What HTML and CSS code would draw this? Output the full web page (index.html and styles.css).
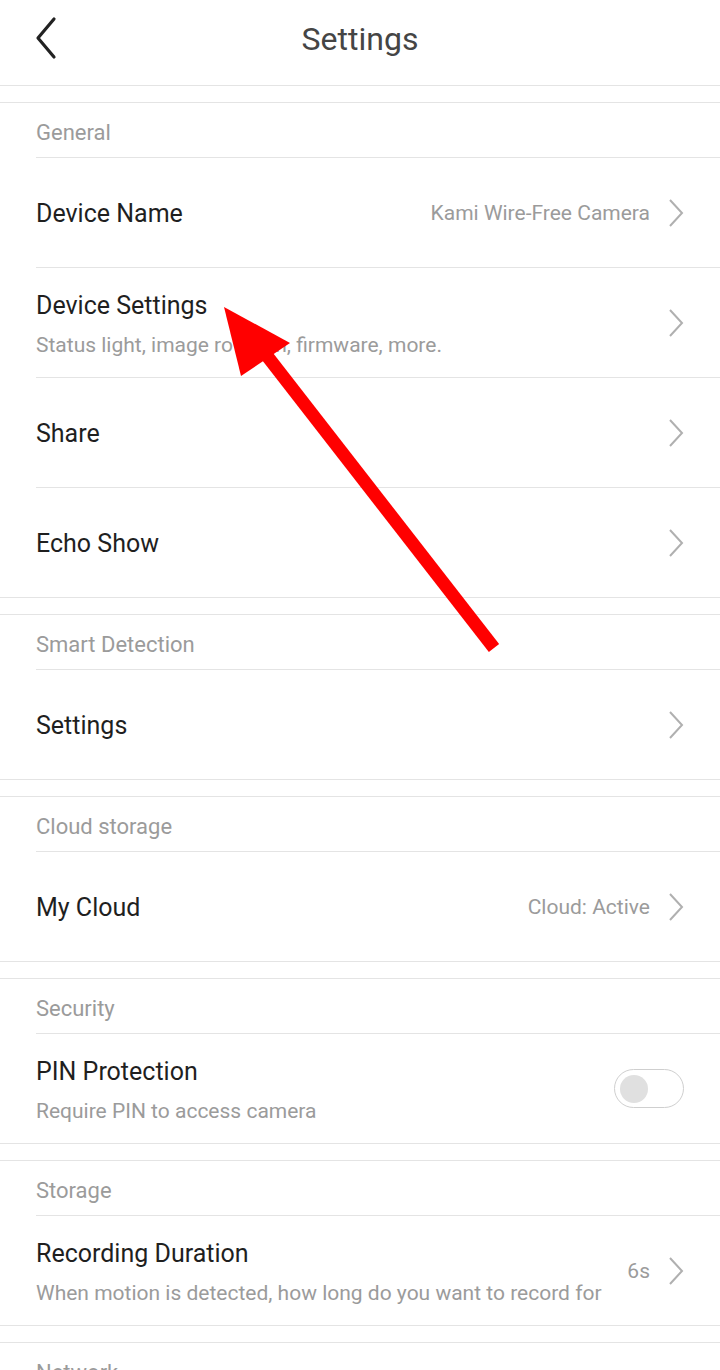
FILE: index.html
```html
<!DOCTYPE html>
<html lang="en">
<head>
<meta charset="UTF-8">
<meta name="viewport" content="width=device-width, initial-scale=1.0">
<title>Settings</title>
<link rel="stylesheet" href="styles.css">
</head>
<body>
    <header class="topbar">
        <a class="back" href="#">
            <svg width="24" height="44" viewBox="0 0 24 44">
                <polyline points="20,3 4,22 20,41" fill="none" stroke="#222" stroke-width="3.2" stroke-linecap="round" stroke-linejoin="round"/>
            </svg>
        </a>
        <h1>Settings</h1>
    </header>

    <main class="page">
        <section class="group">
            <div class="group-title">General</div>
            <div class="row">
                <div class="row-text"><div class="label">Device Name</div></div>
                <span class="value">Kami Wire-Free Camera</span>
                <span class="chev"></span>
            </div>
            <div class="row">
                <div class="row-text">
                    <div class="label">Device Settings</div>
                    <div class="sub">Status light, image rotation, firmware, more.</div>
                </div>
                <span class="chev"></span>
            </div>
            <div class="row">
                <div class="row-text"><div class="label">Share</div></div>
                <span class="chev"></span>
            </div>
            <div class="row">
                <div class="row-text"><div class="label">Echo Show</div></div>
                <span class="chev"></span>
            </div>
        </section>

        <section class="group">
            <div class="group-title">Smart Detection</div>
            <div class="row">
                <div class="row-text"><div class="label">Settings</div></div>
                <span class="chev"></span>
            </div>
        </section>

        <section class="group">
            <div class="group-title">Cloud storage</div>
            <div class="row">
                <div class="row-text"><div class="label">My Cloud</div></div>
                <span class="value">Cloud: Active</span>
                <span class="chev"></span>
            </div>
        </section>

        <section class="group">
            <div class="group-title">Security</div>
            <div class="row">
                <div class="row-text">
                    <div class="label">PIN Protection</div>
                    <div class="sub">Require PIN to access camera</div>
                </div>
                <span class="toggle"><span class="knob"></span></span>
            </div>
        </section>

        <section class="group">
            <div class="group-title">Storage</div>
            <div class="row">
                <div class="row-text">
                    <div class="label">Recording Duration</div>
                    <div class="sub">When motion is detected, how long do you want to record for</div>
                </div>
                <span class="value">6s</span>
                <span class="chev"></span>
            </div>
        </section>

        <section class="group">
            <div class="group-title">Network</div>
        </section>
    </main>

    <!-- annotation arrow -->
    <svg class="pointer" width="720" height="700" viewBox="0 0 720 700">
        <line x1="494" y1="648" x2="264" y2="352" stroke="#ff0000" stroke-width="13"/>
        <polygon points="224,307 290,343 241,376" fill="#ff0000"/>
    </svg>
</body>
</html>
```

FILE: styles.css
```css
body {
    margin: 0;
    padding: 0;
    background: #fff;
    font-family: Roboto, "Noto Sans", "Liberation Sans", sans-serif;
    color: #222;
    overflow: hidden;
}
.topbar {
    height: 85px;
    border-bottom: 1px solid #e4e4e4;
    display: flex;
    align-items: center;
    justify-content: center;
    position: relative;
}
.topbar h1 {
    margin: 0;
    font-size: 32px;
    font-weight: 400;
    color: #454545;
    margin-top: -8px;
}
.back {
    position: absolute;
    left: 34px;
    top: 16px;
    display: block;
    line-height: 0;
}
.page {
    padding-top: 16px;
}
.group {
    border-top: 1px solid #e4e4e4;
    border-bottom: 1px solid #e4e4e4;
    margin-bottom: 16px;
}
.group-title {
    height: 55px;
    margin-left: 36px;
    border-bottom: 1px solid #e4e4e4;
    display: flex;
    align-items: center;
    padding-top: 4px;
    box-sizing: border-box;
    font-size: 22px;
    color: #9b9b9b;
}
.row {
    height: 109px;
    margin-left: 36px;
    padding-right: 36px;
    border-bottom: 1px solid #e4e4e4;
    display: flex;
    align-items: center;
}
.row:last-child {
    border-bottom: none;
}
.row-text {
    flex: 1;
    min-width: 0;
    padding-top: 3px;
}
.label {
    font-size: 25px;
    line-height: 30px;
    color: #1f1f1f;
}
.sub {
    font-size: 21px;
    line-height: 26px;
    margin-top: 11px;
    color: #9b9b9b;
    white-space: nowrap;
}
.value {
    font-size: 21px;
    color: #9b9b9b;
    margin-left: 20px;
}
.chev {
    width: 16px;
    height: 28px;
    margin-left: 18px;
    flex-shrink: 0;
    background: url("data:image/svg+xml;utf8,<svg xmlns='http://www.w3.org/2000/svg' width='16' height='28' viewBox='0 0 16 28'><polyline points='2,1 14,14 2,27' fill='none' stroke='%23b0b0b0' stroke-width='2'/></svg>") no-repeat center;
}
.toggle {
    width: 70px;
    height: 39px;
    box-sizing: border-box;
    border: 1px solid #cfcfcf;
    border-radius: 20px;
    display: flex;
    align-items: center;
    padding-left: 5px;
    flex-shrink: 0;
}
.knob {
    width: 28px;
    height: 28px;
    border-radius: 50%;
    background: #e0e0e0;
}
.pointer {
    position: absolute;
    left: 0;
    top: 0;
    pointer-events: none;
}
```
